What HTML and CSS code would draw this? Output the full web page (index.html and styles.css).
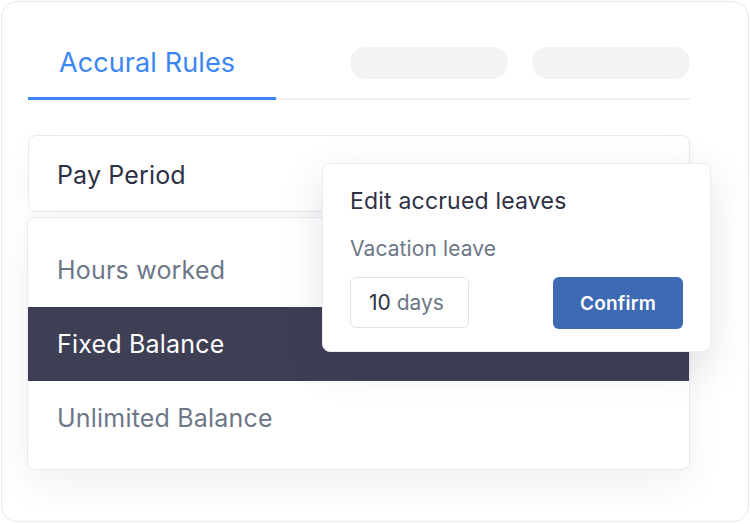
FILE: index.html
```html
<!DOCTYPE html>
<html lang="en">
<head>
    <meta charset="UTF-8">
    <meta name="viewport" content="width=device-width, initial-scale=1.0">
    <title>Accural Rules</title>
    <link rel="stylesheet" href="styles.css">
</head>
<body>
    <div class="card">
        <div class="tabs">
            <div class="tab active">Accural Rules</div>
            <div class="pill"></div>
            <div class="pill"></div>
        </div>

        <div class="select">Pay Period</div>

        <ul class="options">
            <li>Hours worked</li>
            <li class="selected">Fixed Balance</li>
            <li>Unlimited Balance</li>
        </ul>

        <div class="popup">
            <h2>Edit accrued leaves</h2>
            <p class="label">Vacation leave</p>
            <div class="popup-row">
                <div class="days-input"><span class="num">10</span> days</div>
                <button class="confirm">Confirm</button>
            </div>
        </div>
    </div>
</body>
</html>
```

FILE: styles.css
```css
* {
    box-sizing: border-box;
}

body {
    font-family: Inter, "Noto Sans", sans-serif;
    background-color: #ffffff;
    margin: 0;
    padding: 1px;
    color: #2e3045;
}

.card {
    position: relative;
    width: 748px;
    height: 521px;
    border: 1.5px solid #e9e9ee;
    border-radius: 16px;
    padding: 45px 58px 0 26px;
    background-color: #ffffff;
}

.tabs {
    display: flex;
    align-items: flex-start;
    border-bottom: 2px solid #ededf2;
}

.tab {
    width: 248px;
    height: 53px;
    margin-bottom: -2px;
    padding: 0 0 0 31px;
    font-size: 27px;
    line-height: 32px;
    letter-spacing: 0.1px;
    color: #3a86f5;
}

.tab.active {
    border-bottom: 3px solid #3a86f5;
}

.pill {
    width: 158px;
    height: 32px;
    border-radius: 16px;
    background-color: #f3f3f4;
    margin-left: 24px;
}

.tab + .pill {
    margin-left: 74px;
}

.select {
    margin-top: 35px;
    height: 77px;
    border: 1.5px solid #e9e9ef;
    border-radius: 8px;
    padding-left: 28px;
    font-size: 25px;
    line-height: 78px;
    letter-spacing: 0.15px;
    box-shadow: 0 12px 30px rgba(40, 40, 80, 0.04);
}

.options {
    list-style: none;
    margin: 5px 0 0 -1px;
    padding: 15px 0 15px;
    height: 253px;
    border: 1.5px solid #e9e9ef;
    border-radius: 8px;
    background-color: #ffffff;
    box-shadow: 0 16px 36px rgba(40, 40, 80, 0.06);
}

.options li {
    height: 74px;
    line-height: 74px;
    padding-left: 29px;
    font-size: 25px;
    letter-spacing: 0.2px;
    color: #6d7788;
}

.options li.selected {
    background-color: #3e3e55;
    color: #ffffff;
}

.popup {
    position: absolute;
    left: 320px;
    top: 161px;
    width: 389px;
    height: 189px;
    padding: 22px 27px 0 27px;
    background-color: #ffffff;
    border: 1.5px solid #ececf1;
    border-radius: 8px;
    box-shadow: 0 14px 44px rgba(40, 40, 80, 0.12);
}

.popup h2 {
    margin: 0;
    font-size: 23px;
    font-weight: 400;
    line-height: 30px;
    letter-spacing: 0.2px;
    color: #2e3045;
}

.label {
    margin: 20px 0 0;
    font-size: 21px;
    line-height: 26px;
    letter-spacing: 0.1px;
    color: #6d7788;
}

.popup-row {
    display: flex;
    align-items: flex-start;
    margin-top: 15px;
}

.days-input {
    width: 119px;
    height: 51px;
    border: 1.5px solid #e1e2e8;
    border-radius: 6px;
    padding-left: 18px;
    font-size: 21px;
    line-height: 50px;
    color: #6d7788;
}

.days-input .num {
    color: #2e3045;
}

.confirm {
    margin-left: auto;
    width: 130px;
    height: 52px;
    border: none;
    border-radius: 6px;
    background-color: #3d6ab2;
    color: #ffffff;
    font-family: Inter, "Noto Sans", sans-serif;
    font-size: 19px;
    font-weight: 600;
    letter-spacing: 0.2px;
    cursor: pointer;
}
```
